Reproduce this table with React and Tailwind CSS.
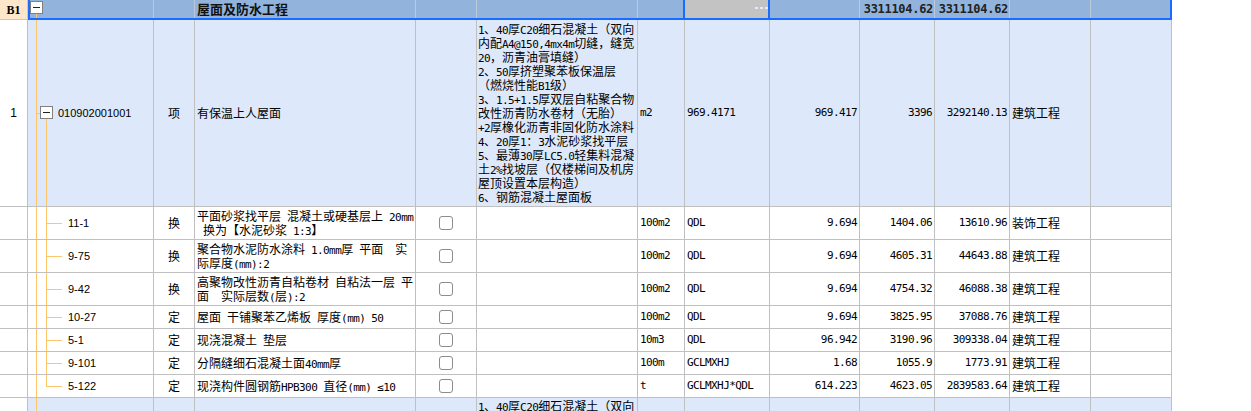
import React from 'react'

const SANS = "font-['Liberation_Sans','Noto_Sans_CJK_SC',sans-serif]"
const CJK = "font-['Noto_Sans_CJK_SC',sans-serif]"
const MONO = "font-['DejaVu_Sans_Mono','Noto_Sans_CJK_SC',monospace] text-[11px] tracking-[-0.6px]"

const W = [
  'w-[28px]', 'w-[126px]', 'w-[41px]', 'w-[221px]', 'w-[61px]', 'w-[161px]', 'w-[47px]',
  'w-[85px]', 'w-[90px]', 'w-[75px]', 'w-[75px]', 'w-[81px]', 'w-[81px]',
]

// half-width runs get a 6px mono so mixed lines keep the width of the original
const Mixed = ({ text }) =>
  text.split(/([\x20-\x7e≤]+)/).map((part, k) =>
    /^[\x20-\x7e≤]+$/.test(part)
      ? <span key={k} className={MONO}>{part}</span>
      : <span key={k}>{part}</span>
  )

const Line = ({ text }) => (
  <div className="h-[14px] leading-[14px] whitespace-pre">
    <Mixed text={text} />
  </div>
)

const features = [
  '1、40厚C20细石混凝土（双向',
  '内配A4@150,4mx4m切缝，缝宽',
  '20，沥青油膏填缝）',
  '2、50厚挤塑聚苯板保温层',
  '（燃烧性能B1级）',
  '3、1.5+1.5厚双层自粘聚合物',
  '改性沥青防水卷材（无胎）',
  '+2厚橡化沥青非固化防水涂料',
  '4、20厚1：3水泥砂浆找平层',
  '5、最薄30厚LC5.0轻集料混凝',
  '土2%找坡层（仅楼梯间及机房',
  '屋顶设置本层构造）',
  '6、钢筋混凝土屋面板',
]

const children = [
  { code: '11-1', type: '换', name: ['平面砂浆找平层 混凝土或硬基层上 20mm', ' 换为【水泥砂浆 1:3】'], unit: '100m2', expr: 'QDL', qty: '9.694', price: '1404.06', total: '13610.96', major: '装饰工程', tall: true },
  { code: '9-75', type: '换', name: ['聚合物水泥防水涂料 1.0mm厚 平面　实', '际厚度(mm):2'], unit: '100m2', expr: 'QDL', qty: '9.694', price: '4605.31', total: '44643.88', major: '建筑工程', tall: true },
  { code: '9-42', type: '换', name: ['高聚物改性沥青自粘卷材 自粘法一层 平', '面　实际层数(层):2'], unit: '100m2', expr: 'QDL', qty: '9.694', price: '4754.32', total: '46088.38', major: '建筑工程', tall: true },
  { code: '10-27', type: '定', name: ['屋面 干铺聚苯乙烯板 厚度(mm) 50'], unit: '100m2', expr: 'QDL', qty: '9.694', price: '3825.95', total: '37088.76', major: '建筑工程' },
  { code: '5-1', type: '定', name: ['现浇混凝土 垫层'], unit: '10m3', expr: 'QDL', qty: '96.942', price: '3190.96', total: '309338.04', major: '建筑工程' },
  { code: '9-101', type: '定', name: ['分隔缝细石混凝土面40mm厚'], unit: '100m', expr: 'GCLMXHJ', qty: '1.68', price: '1055.9', total: '1773.91', major: '建筑工程' },
  { code: '5-122', type: '定', name: ['现浇构件圆钢筋HPB300 直径(mm) ≤10'], unit: 't', expr: 'GCLMXHJ*QDL', qty: '614.223', price: '4623.05', total: '2839583.64', major: '建筑工程' },
]

const Cell = ({ i, className = '', children }) => (
  <div className={`${W[i]} shrink-0 h-full border-r border-b border-[#c0c0c0] overflow-hidden whitespace-nowrap ${className}`}>
    {children}
  </div>
)

const Box = ({ className = '' }) => (
  <div className={`absolute w-[13px] h-[13px] border border-[#808080] bg-white flex items-center justify-center ${className}`}>
    <div className="w-[7px] h-px bg-[#222]" />
  </div>
)

const Check = () => <div className="w-[14px] h-[14px] rounded-[3px] border border-[#8c8c8c] bg-white" />

const Num = ({ i, children, className = '' }) => (
  <Cell i={i} className={`flex items-center justify-end pr-[2px] ${MONO} ${className}`}>{children}</Cell>
)

const BillRow = ({ last }) => (
  <div className="flex h-[187px]">
    <Cell i={0} className={`bg-white flex items-center justify-center text-[12px] text-black ${SANS}`}>
      {!last && '1'}
    </Cell>
    <Cell i={1} className="relative bg-[#dde9fb]">
      <div className="absolute left-[8px] top-0 bottom-0 w-px bg-[#ffc56a]" />
      {!last && (
        <>
          <div className="absolute left-[8px] top-1/2 w-[4px] h-px bg-[#ffc56a]" />
          <Box className="left-[12px] top-[86px]" />
          <div className="absolute left-[18px] top-[99px] bottom-0 w-px bg-[#ffc56a]" />
          <div className={`absolute left-[30px] top-0 bottom-0 flex items-center text-[11px] ${SANS}`}>010902001001</div>
        </>
      )}
    </Cell>
    <Cell i={2} className={`bg-[#dde9fb] flex items-center justify-center text-[12px] ${CJK}`}>
      {!last && '项'}
    </Cell>
    <Cell i={3} className={`bg-[#dde9fb] flex items-center pl-[2px] text-[12px] ${CJK}`}>
      {!last && '有保温上人屋面'}
    </Cell>
    <Cell i={4} className="bg-[#dde9fb]" />
    <Cell i={5} className={`bg-[#dde9fb] flex flex-col ${last ? 'justify-start pt-[1px]' : 'justify-center'} pl-px text-[12px] ${CJK}`}>
      {features.map((f, k) => <Line key={k} text={f} />)}
    </Cell>
    <Cell i={6} className={`bg-[#dde9fb] flex items-center pl-[2px] ${MONO}`}>{!last && 'm2'}</Cell>
    <Cell i={7} className={`bg-[#dde9fb] flex items-center pl-[2px] ${MONO}`}>{!last && '969.4171'}</Cell>
    <Num i={8} className="bg-[#dde9fb]">{!last && '969.417'}</Num>
    <Num i={9} className="bg-[#dde9fb]">{!last && '3396'}</Num>
    <Num i={10} className="bg-[#dde9fb]">{!last && '3292140.13'}</Num>
    <Cell i={11} className={`bg-[#dde9fb] flex items-center pl-[2px] text-[12px] ${CJK}`}>{!last && '建筑工程'}</Cell>
    <Cell i={12} className="bg-[#dde9fb]" />
  </div>
)

const ItemRow = ({ r, end }) => (
  <div className={`flex ${r.tall ? 'h-[33px]' : 'h-[23px]'} bg-white`}>
    <Cell i={0} />
    <Cell i={1} className="relative">
      <div className="absolute left-[8px] top-0 bottom-0 w-px bg-[#ffc56a]" />
      <div className={`absolute left-[18px] top-0 w-px bg-[#ffc56a] ${end ? 'h-1/2' : 'bottom-0'}`} />
      <div className="absolute left-[18px] top-1/2 w-[16px] h-px bg-[#ffc56a]" />
      <div className={`absolute left-[40px] top-0 bottom-0 flex items-center text-[11px] ${SANS}`}>{r.code}</div>
    </Cell>
    <Cell i={2} className={`flex items-center justify-center text-[12px] ${CJK}`}>{r.type}</Cell>
    <Cell i={3} className={`flex flex-col justify-center pl-[2px] text-[12px] ${CJK}`}>
      {r.name.map((n, k) => <Line key={k} text={n} />)}
    </Cell>
    <Cell i={4} className="flex items-center justify-center"><Check /></Cell>
    <Cell i={5} />
    <Cell i={6} className={`flex items-center pl-[2px] ${MONO}`}>{r.unit}</Cell>
    <Cell i={7} className={`flex items-center pl-[2px] ${MONO}`}>{r.expr}</Cell>
    <Num i={8}>{r.qty}</Num>
    <Num i={9}>{r.price}</Num>
    <Num i={10}>{r.total}</Num>
    <Cell i={11} className={`flex items-center pl-[2px] text-[12px] ${CJK}`}>{r.major}</Cell>
    <Cell i={12} />
  </div>
)

const HeaderRow = () => {
  const hc = 'shrink-0 h-full border-r border-[#bcc9dc]'
  const total = `flex items-center justify-end pr-[1px] text-[12px] font-bold font-['DejaVu_Sans_Mono',monospace] tracking-[-0.3px] text-[#222]`
  return (
    <div className="flex h-[20px]">
      <div className="w-[28px] shrink-0 h-full bg-[#fde6c9] border-r border-b border-[#c8c8c8] flex items-center justify-center text-[12px] font-bold font-['Liberation_Serif',serif]">
        B1
      </div>
      <div className="w-[1144px] shrink-0 h-full flex border-l-2 border-r-2 border-b-2 border-[#1a6cff] bg-[#92b4dc]">
        <div className={`w-[124px] relative ${hc}`}>
          <Box className="left-0 top-px" />
          <div className="absolute left-[6px] top-[14px] bottom-0 w-px bg-[#ffc56a]" />
        </div>
        <div className={`w-[41px] ${hc}`} />
        <div className={`w-[221px] ${hc} flex items-center pl-[2px] text-[13px] font-bold ${CJK} text-[#111]`}>
          屋面及防水工程
        </div>
        <div className={`w-[61px] ${hc}`} />
        <div className={`w-[161px] ${hc}`} />
        <div className="w-[45px] shrink-0 h-full" />
        <div className="w-[87px] shrink-0 h-full bg-[#c3c3c3] border-x-2 border-[#1a6cff] flex justify-end items-start pt-[7px] gap-[2px]">
          <span className="w-[3px] h-[2px] bg-[#e4ecf8]" />
          <span className="w-[3px] h-[2px] bg-[#e4ecf8]" />
          <span className="w-[3px] h-[2px] bg-[#e4ecf8]" />
        </div>
        <div className={`w-[90px] ${hc}`} />
        <div className={`w-[75px] ${hc} ${total}`}>3311104.62</div>
        <div className={`w-[75px] ${hc} ${total}`}>3311104.62</div>
        <div className={`w-[81px] ${hc}`} />
        <div className="w-[79px] shrink-0 h-full" />
      </div>
    </div>
  )
}

export default function App() {
  return (
    <div className="w-[1251px] h-[411px] overflow-hidden bg-white text-black">
      <HeaderRow />
      <BillRow />
      {children.map((r, k) => (
        <ItemRow key={k} r={r} end={k === children.length - 1} />
      ))}
      <BillRow last />
    </div>
  )
}
